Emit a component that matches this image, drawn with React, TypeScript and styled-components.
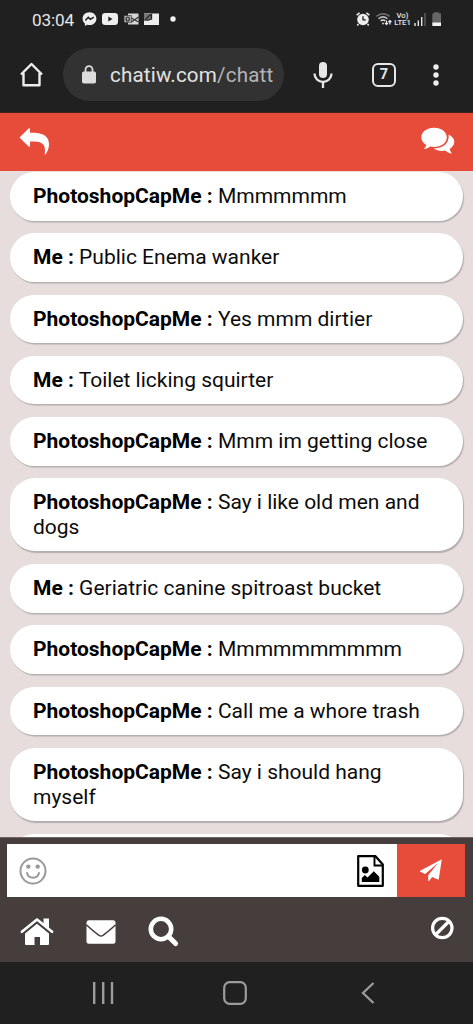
import React from 'react';
import styled, { createGlobalStyle } from 'styled-components';

const Global = createGlobalStyle`
  * { box-sizing: border-box; }
  body { margin: 0; background: #202020; font-family: Roboto, "Liberation Sans", sans-serif; }
`;

const Screen = styled.div`
  width: 473px;
  height: 1024px;
  display: flex;
  flex-direction: column;
  overflow: hidden;
  background: #202020;
`;

const Icon = styled.svg<{ $left?: number; $bottom?: number }>`
  display: block;
  flex: none;
  margin-left: ${p => p.$left ?? 0}px;
  margin-bottom: ${p => p.$bottom ?? 0}px;
`;

const StatusBar = styled.div`
  height: 38px;
  flex: none;
  display: flex;
  align-items: center;
  padding: 0 31px 0 32px;
  color: #e6e6e6;
`;

const Clock = styled.span`
  font-size: 17.2px;
  line-height: 20px;
  width: 50px;
  padding-top: 1px;
  letter-spacing: -0.15px;
  white-space: nowrap;
`;

const StatusGroup = styled.div<{ $gap: number }>`
  display: flex;
  align-items: center;
  gap: ${p => p.$gap}px;
`;

const Spacer = styled.div`
  flex: 1;
`;

const Network = styled.div`
  width: 17px;
  font-size: 7.7px;
  line-height: 7.3px;
  font-weight: 500;
  white-space: nowrap;
  margin-right: 1px;
  display: flex;
  flex-direction: column;
  align-items: center;
`;

const BrowserBar = styled.div`
  height: 74.5px;
  flex: none;
  display: flex;
  align-items: center;
  padding: 0 30px 0 19px;
  border-bottom: 1px solid #40251f;
`;

const Address = styled.div`
  width: 221px;
  height: 53px;
  margin-left: 19px;
  border-radius: 27px;
  background: #323232;
  display: flex;
  align-items: center;
  gap: 14px;
  padding-left: 19px;
  color: #e2e2e2;
  font-size: 20.6px;
  letter-spacing: 0.17px;
  white-space: nowrap;
`;

const Path = styled.span`
  color: #b4b4b4;
`;

const TabCount = styled.div`
  width: 24px;
  height: 24px;
  margin-left: 39px;
  border: 2.3px solid #e6e6e6;
  border-radius: 6px;
  color: #e6e6e6;
  font-size: 14.5px;
  font-weight: 700;
  line-height: 20px;
  text-align: center;
`;

const Header = styled.header`
  height: 58.5px;
  flex: none;
  display: flex;
  align-items: center;
  justify-content: space-between;
  padding: 0 18.5px 1px 19px;
  background: #e74c3b;
`;

const Messages = styled.main`
  height: 666px;
  flex: none;
  overflow: hidden;
  display: flex;
  flex-direction: column;
  gap: 12.75px;
  padding: 1px 10px 0;
  background: #e7dddd;
`;

const Bubble = styled.div`
  flex: none;
  width: 452.5px;
  padding: 12px 23px 11.8px;
  border-radius: 25px;
  background: #fff;
  box-shadow: 1px 1.5px 1px #b5adad;
  color: #0c0c0c;
  font-size: 21px;
  line-height: 24.7px;
`;

const Name = styled.b`
  font-weight: 700;
  color: #000;
`;

const Footer = styled.footer`
  height: 125px;
  flex: none;
  background: #463e3c;
  border-top: 1px solid #6e6765;
`;

const Composer = styled.div`
  display: flex;
  height: 53px;
  margin: 6px 8px 0 7px;
`;

const Input = styled.div`
  width: 390px;
  background: #fff;
  display: flex;
  align-items: center;
  justify-content: space-between;
  padding: 0 13px 0 12px;
`;

const Send = styled.div`
  flex: 1;
  background: #e74c3b;
  display: flex;
  align-items: center;
  justify-content: center;
`;

const Tools = styled.div`
  height: 65px;
  display: flex;
  align-items: center;
  padding: 5px 19px 0 20px;
`;

const SystemNav = styled.nav`
  flex: 1;
  display: flex;
  align-items: center;
  padding-left: 92px;
`;

const messages: { from: string; text: string }[] = [
  { from: 'PhotoshopCapMe', text: 'Mmmmmmm' },
  { from: 'Me', text: 'Public Enema wanker' },
  { from: 'PhotoshopCapMe', text: 'Yes mmm dirtier' },
  { from: 'Me', text: 'Toilet licking squirter' },
  { from: 'PhotoshopCapMe', text: 'Mmm im getting close' },
  { from: 'PhotoshopCapMe', text: 'Say i like old men and dogs' },
  { from: 'Me', text: 'Geriatric canine spitroast bucket' },
  { from: 'PhotoshopCapMe', text: 'Mmmmmmmmmm' },
  { from: 'PhotoshopCapMe', text: 'Call me a whore trash' },
  { from: 'PhotoshopCapMe', text: 'Say i should hang myself' },
];

const MoreBubble = styled(Bubble)`
  height: 48px;
`;

const Status = () => (
  <StatusBar>
    <Clock>03:04</Clock>
    <StatusGroup $gap={5.3}>
      <Icon width="15" height="14" viewBox="0 0 15 14">
        <path d="M7.5 0.2C3.5 0.2.6 3 .6 6.7c0 2 .9 3.7 2.3 4.8V14l2.2-1.2c.8.2 1.6.3 2.4.3 4 0 6.9-2.8 6.9-6.4S11.500.2 7.5.2z" fill="#eee" />
        <path d="M3.3 8.5l3-3.2 2.100 2 3.400-2.200" fill="none" stroke="#202020" strokeWidth="1.5" />
      </Icon>
      <Icon width="16" height="12" viewBox="0 0 16 12">
        <rect width="16" height="12" rx="3.2" fill="#eee" />
        <path d="M6.300 3.500v5l4.200-2.500z" fill="#202020" />
      </Icon>
      <Icon width="15" height="13" viewBox="0 0 15 13">
        <path d="M4 .5h10.500v11H4z" fill="#d5d5d5" />
        <path d="M0 2.500h7.500v7H0z" fill="#aaa" stroke="#303030" strokeWidth=".6" />
        <ellipse cx="3.700" cy="6" rx="1.700" ry="2" fill="none" stroke="#252525" strokeWidth="1.100" />
        <path d="M7.500 5l7 4M14.500 4l-7 5" stroke="#333" strokeWidth="1.200" />
      </Icon>
      <Icon width="15" height="13" viewBox="0 0 15 13">
        <path d="M0 .5h15v11.500H0z" fill="#eee" />
        <path d="M0 1h8L7 6 3 8H0z" fill="#777" />
        <path d="M1 7l5-5M6 2l1.500-.5V6L3 7.500" stroke="#242424" strokeWidth="1.300" fill="none" />
      </Icon>
      <Icon width="20" height="6" viewBox="0 0 20 6">
        <circle cx="9" cy="3" r="2.700" fill="#f2f2f2" />
      </Icon>
    </StatusGroup>
    <Spacer />
    <StatusGroup $gap={2}>
      <Icon width="14" height="14" viewBox="0 0 14 14">
        <circle cx="7" cy="7.500" r="5.800" fill="#eee" />
        <path d="M.6 3.200L3.600.8M13.400 3.200L10.400.8M2.500 12L1.300 13.500M11.500 12l1.200 1.500" stroke="#eee" strokeWidth="1.500" />
        <path d="M7 4.200v3.600h2.800" fill="none" stroke="#202020" strokeWidth="1.300" />
      </Icon>
      <Icon width="20" height="14" viewBox="0 0 20 14">
        <g transform="translate(4 0)" fill="none" strokeWidth="1.500">
          <path d="M.5 4.300Q7 -1 13.500 4.300" stroke="#777" />
          <path d="M2.500 6.800Q7 3 11.500 6.800" stroke="#bbb" />
          <path d="M4.700 9Q7 7 9.300 9" stroke="#ddd" />
          <circle cx="7" cy="11.500" r=".9" fill="#ddd" />
          <path d="M10.500 8.500v4M9 11l1.500 1.500L12 11M13.900 12.500v-4M12.400 10l1.500-1.500L15.400 10" stroke="#eee" strokeWidth="1.200" />
        </g>
      </Icon>
      <Network><span>Vo)</span><span>LTE1</span></Network>
      <Icon width="12" height="13" viewBox="0 0 12 13">
        <path d="M1 10v3M4.300 7.500V13M7.700 4v9" stroke="#e6e6e6" strokeWidth="1.400" />
        <path d="M11 0v13" stroke="#666" strokeWidth="1.300" />
      </Icon>
      <Icon width="14" height="14" viewBox="0 0 14 14">
        <path d="M6 1.500V.3h5v1.200H13V11H4.300V1.500z" fill="#666" />
        <path d="M4.300 10.500H13V14H4.300z" fill="#f3f3f3" />
      </Icon>
    </StatusGroup>
  </StatusBar>
);

const Browser = () => (
  <BrowserBar>
    <Icon width="25" height="25" viewBox="0 0 25 25">
      <path d="M2 12.500L12.500 2 23 12.500M4.500 11v12.300h16V11" fill="none" stroke="#eee" strokeWidth="2.400" strokeLinejoin="round" />
    </Icon>
    <Address>
      <Icon width="14" height="19" viewBox="0 0 14 19">
        <rect y="6.500" width="14" height="12" rx="1.800" fill="#ddd" />
        <path d="M3.500 7V4.600a3.500 3.500 0 0 1 7 0V7" fill="none" stroke="#ddd" strokeWidth="1.800" />
      </Icon>
      <span>chatiw.com<Path>/chatt</Path></span>
    </Address>
    <Icon width="20" height="28" viewBox="0 0 20 28" $left={29}>
      <rect x="6" y="1" width="8" height="16" rx="4" fill="#e6e6e6" />
      <path d="M1.500 12.500a8.500 8.500 0 0 0 17 0M10 21v6" fill="none" stroke="#e6e6e6" strokeWidth="2.300" />
    </Icon>
    <TabCount>7</TabCount>
    <Spacer />
    <Icon width="14" height="24" viewBox="0 0 14 24">
      <g fill="#eee"><circle cx="7" cy="4" r="2.700" /><circle cx="7" cy="12" r="2.700" /><circle cx="7" cy="20" r="2.700" /></g>
    </Icon>
  </BrowserBar>
);

export default function App() {
  return (
    <Screen>
      <Global />
      <Status />
      <Browser />
      <Header>
        <Icon width="31" height="27" viewBox="0 0 31 27">
          <path d="M.5 9.500L9.600.6Q11 -.4 11 1.200V4.800H15C25 5.200 30.300 9 30 17c-.2 3.500-1.500 7-3.400 9.300-.6.500-1.100.200-.900-.5C27 17 24 13.700 15 13.500H11V18Q11 19.500 9.600 18.400z" fill="#fff" />
        </Icon>
        <Icon width="35" height="28" viewBox="0 0 35 28">
          <path d="M14 .7C6.700.7 1.300 5 1.300 10.300c0 3.200 2 6 5 7.800-.4 1.500-1.300 2.900-2.600 4 2.500 0 4.700-1 6.500-2.500 1.200.3 2.500.4 3.800.4 7.300 0 12.800-4.300 12.800-9.700S21.300.7 14 .7z" fill="#fff" />
          <path d="M28.700 7.500c3.400 1.700 5.600 4.300 5.600 7.200 0 3-1.900 5.500-4.600 7.200.3 1.600 1.100 3 2.400 4.600-2.900 0-5-1.300-6.700-2.900-4.600.9-9-.3-11.800-2.100C22.500 21.500 29.500 16.500 28.700 7.500z" fill="#fff" />
        </Icon>
      </Header>
      <Messages>
        {messages.map((m, i) => (
          <Bubble key={i}><Name>{m.from} :</Name> {m.text}</Bubble>
        ))}
        <MoreBubble />
      </Messages>
      <Footer>
        <Composer>
          <Input>
            <Icon width="28" height="28" viewBox="0 0 28 28">
              <circle cx="14" cy="14" r="12.500" fill="none" stroke="#999" strokeWidth="2" />
              <circle cx="9.300" cy="9.600" r="2.200" fill="#999" /><circle cx="18.700" cy="9.600" r="2.200" fill="#999" />
              <path d="M8 16c1.500 6.200 10.500 6.200 12 0" fill="none" stroke="#999" strokeWidth="2" strokeLinecap="round" />
            </Icon>
            <Icon width="27" height="32" viewBox="0 0 27 32">
              <path d="M1.200 1.200h17.300l7.300 8.300v21.300H1.200z" fill="none" stroke="#000" strokeWidth="2.200" strokeLinejoin="round" />
              <path d="M17.500 1.500v9h8" fill="none" stroke="#000" strokeWidth="1.900" />
              <circle cx="8.300" cy="15" r="3.400" fill="#000" />
              <path d="M4.800 27v-4l3-3 2.700 2.500 6.300-6.300 5.500 5.500V27z" fill="#000" />
            </Icon>
          </Input>
          <Send>
            <Icon width="22" height="23" viewBox="0 0 22 23">
              <path d="M21.800.3L.2 11.800q-.5.500.2.900l4.800 2.300L18.300 3.800 8.200 16.200v5.300q.3 1 1 .3l3-3.700 5.600 2.400q.8.200 1-.6z" fill="#fff" />
            </Icon>
          </Send>
        </Composer>
        <Tools>
          <Icon width="34" height="28" viewBox="0 0 34 28">
            <path d="M5 15.500L17 5.700l12 9.800V26q0 1-1 1h-8v-8h-5.500v8H6q-1 0-1-1z" fill="#fff" />
            <path d="M1.900 13.800L17 1.600l15.100 12.200" fill="none" stroke="#fff" strokeWidth="2.600" strokeLinejoin="round" strokeLinecap="round" />
            <path d="M23.500.5H29v10l-5.500-4.400z" fill="#fff" />
          </Icon>
          <Icon width="30" height="24" viewBox="0 0 30 24" $left={32}>
            <rect x=".5" y=".3" width="29" height="23.400" rx="2.500" fill="#fff" />
            <path d="M.3 4.800C5 9 9 12.500 13 15.300q2 1.300 4 0C21 12.500 25 9 29.700 4.800" fill="none" stroke="#463e3c" strokeWidth="1.500" />
          </Icon>
          <Icon width="32" height="32" viewBox="0 0 32 32" $left={32}>
            <circle cx="13" cy="13" r="10.200" fill="none" stroke="#fff" strokeWidth="4.600" />
            <path d="M21 21l6.600 6.600" stroke="#fff" strokeWidth="5" strokeLinecap="round" />
          </Icon>
          <Spacer />
          <Icon width="24" height="24" viewBox="0 0 24 24" $bottom={9}>
            <circle cx="12.300" cy="12" r="9.700" fill="none" stroke="#fff" strokeWidth="3.200" />
            <path d="M5.300 19l14-14" stroke="#fff" strokeWidth="3.200" />
          </Icon>
        </Tools>
      </Footer>
      <SystemNav>
        <Icon width="22" height="22" viewBox="0 0 22 22">
          <path d="M2.200 0v22M11.200 0v22M20 0v22" stroke="#9c9c9c" strokeWidth="2.400" />
        </Icon>
        <Icon width="24" height="24" viewBox="0 0 24 24" $left={109}>
          <rect x="1.200" y="1.200" width="21.600" height="21.600" rx="5.500" fill="none" stroke="#9c9c9c" strokeWidth="2.200" />
        </Icon>
        <Icon width="14" height="22" viewBox="0 0 14 22" $left={114}>
          <path d="M12.500 1L2 11l10.500 10" fill="none" stroke="#9c9c9c" strokeWidth="2.300" />
        </Icon>
      </SystemNav>
    </Screen>
  );
}
